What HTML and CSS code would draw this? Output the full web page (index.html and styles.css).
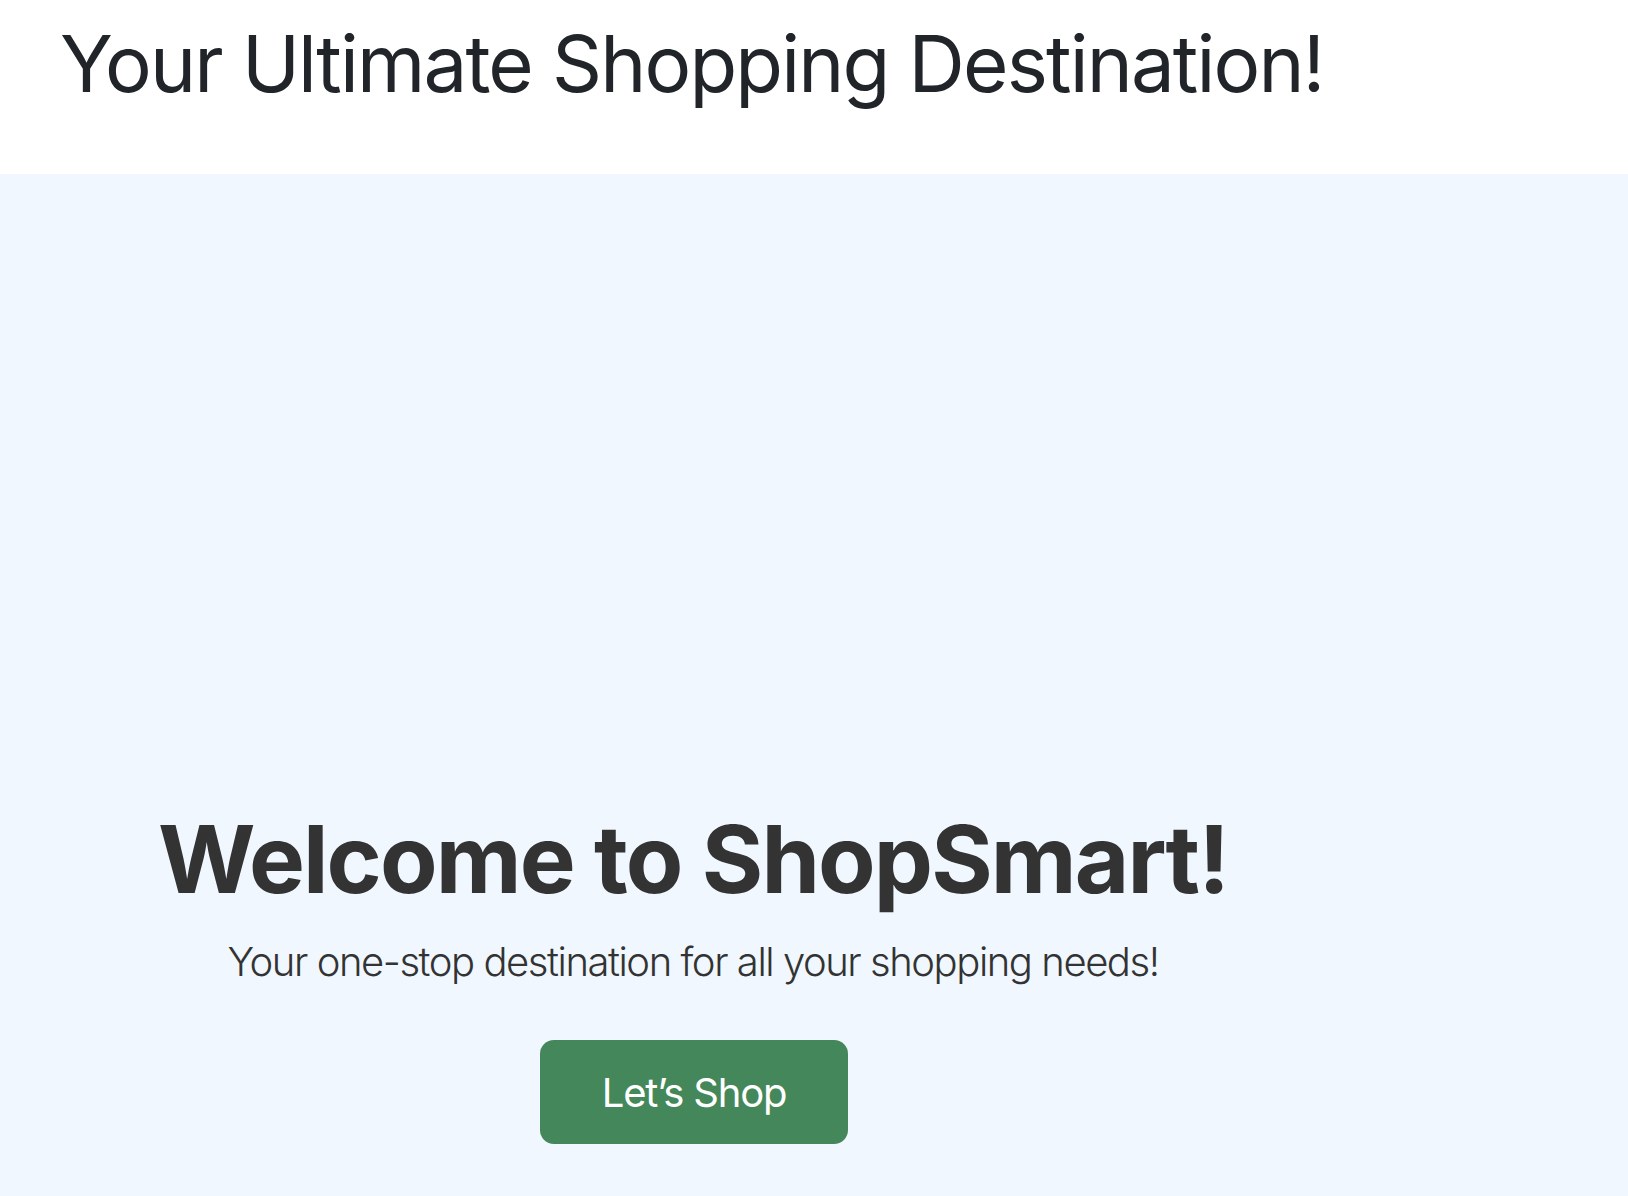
FILE: index.html
```html
<!DOCTYPE html>
<html lang="en">
<head>
<meta charset="utf-8">
<title>ShopSmart</title>
<link rel="stylesheet" href="styles.css">
</head>
<body>
<header class="site-header">
  <h1 class="tagline">Your Ultimate Shopping Destination!</h1>
</header>
<section class="hero">
  <div class="hero-inner">
    <h2 class="hero-title">Welcome to ShopSmart!</h2>
    <p class="hero-sub">Your one-stop destination for all your shopping needs!</p>
    <a class="hero-btn" href="#">Let’s Shop</a>
  </div>
</section>
</body>
</html>
```

FILE: styles.css
```css
html, body {
  margin: 0;
  padding: 0;
}
body {
  font-family: Inter, "Noto Sans", sans-serif;
  background: #f0f7fe;
  min-height: 1196px;
}
.site-header {
  background: #ffffff;
  height: 174px;
  box-sizing: border-box;
  padding: 16px 0 0 60px;
}
.tagline {
  margin: 0;
  font-size: 78px;
  font-weight: 400;
  letter-spacing: -1.85px;
  color: #212529;
  line-height: normal;
}
.hero {
  background: #f0f7fe;
  padding-top: 628px;
}
.hero-inner {
  width: 1386px;
  display: flex;
  flex-direction: column;
  align-items: center;
  text-align: center;
  color: #333333;
}
.hero-title {
  margin: 0;
  font-size: 94px;
  font-weight: 700;
  letter-spacing: -1.9px;
  line-height: normal;
}
.hero-sub {
  margin: 21px 0 0;
  font-size: 40px;
  font-weight: 300;
  letter-spacing: -1.45px;
  line-height: normal;
}
.hero-btn {
  margin-top: 54px;
  margin-left: 2px;
  display: flex;
  align-items: center;
  justify-content: center;
  width: 308px;
  height: 104px;
  box-sizing: border-box;
  background: #43875a;
  color: #ffffff;
  border-radius: 14px;
  font-size: 40px;
  font-weight: 400;
  letter-spacing: -1.2px;
  text-decoration: none;
}
```
